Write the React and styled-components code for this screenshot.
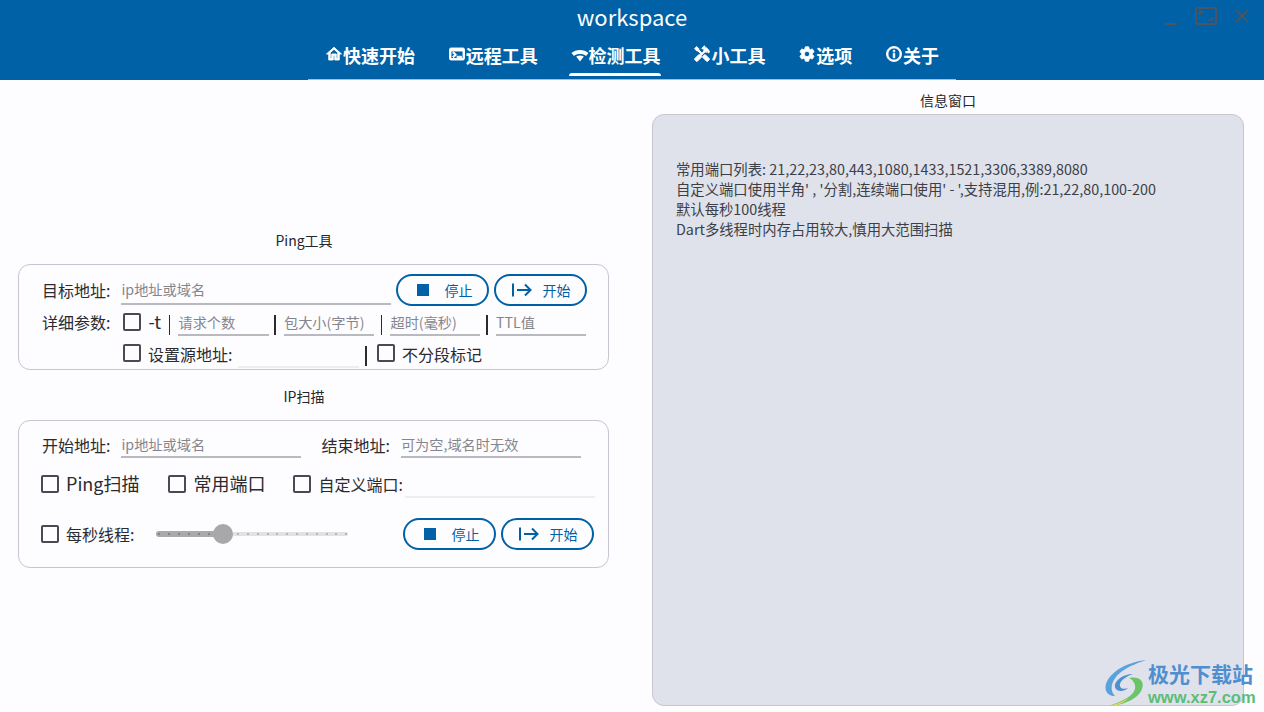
import React from 'react';
import styled, { createGlobalStyle } from 'styled-components';
import {
  MdOutlineHome,
  MdOutlineTerminal,
  MdHandyman,
  MdSettings,
  MdInfoOutline,
} from 'react-icons/md';

const Global = createGlobalStyle`
  html, body {
    margin: 0;
    padding: 0;
    background: #fdfcff;
  }
  * { box-sizing: border-box; }
  body {
    font-family: "Noto Sans CJK SC", "Noto Sans", sans-serif;
    color: #2f3036;
  }
`;

const Page = styled.div`
  position: relative;
  width: 1264px;
  height: 712px;
  overflow: hidden;
  background: #fdfcff;
`;

const Header = styled.header`
  position: relative;
  height: 80px;
  background: #0061a6;
  display: flex;
  flex-direction: column;
  align-items: center;
`;

const Title = styled.div`
  height: 38px;
  font-size: 22px;
  line-height: 33px;
  color: #fff;
`;

const Tabs = styled.nav`
  width: 648px;
  height: 42px;
  padding: 0 17px;
  display: flex;
  justify-content: space-between;
  border-bottom: 1px solid #9dc0dc;
`;

const Tab = styled.div`
  position: relative;
  height: 41px;
  display: flex;
  align-items: flex-start;
  padding-top: 4px;
  color: #fff;
  font-size: 18px;
  font-weight: 700;
  line-height: 27px;
  svg {
    width: 18px;
    height: 18px;
    margin-top: 3px;
    stroke: currentColor;
    stroke-width: ${(p) => (p.$bold ? 1.2 : 0)};
  }
  svg path[fill='none'] {
    stroke: none;
  }
  &::after {
    content: '';
    display: ${(p) => (p.$active ? 'block' : 'none')};
    position: absolute;
    left: -2px;
    right: 0;
    bottom: 3px;
    height: 3px;
    border-radius: 3px 3px 0 0;
    background: #fff;
  }
`;

const WindowButtons = styled.div`
  position: absolute;
  top: 7px;
  right: 14px;
  display: flex;
  align-items: flex-start;
  gap: 17px;
  svg { display: block; }
`;

const Main = styled.main`
  display: grid;
  grid-template-columns: 591px 592px;
  column-gap: 43px;
  padding: 0 20px 0 18px;
`;

const LeftColumn = styled.div`
  padding-top: 150px;
`;

const SectionLabel = styled.div`
  height: 34px;
  padding-right: 19px;
  font-size: 14px;
  line-height: 20px;
  text-align: center;
  color: #26272c;
`;

const Card = styled.section`
  border: 1px solid #c5c6cf;
  border-radius: 12px;
  background: #fdfcff;
  height: ${(p) => p.$height}px;
  margin-bottom: ${(p) => p.$gap || 0}px;
  padding: ${(p) => p.$pad};
  display: flex;
  flex-direction: column;
`;

const Row = styled.div`
  display: flex;
  align-items: center;
  height: ${(p) => p.$height}px;
  margin-left: ${(p) => p.$indent || 0}px;
  margin-top: ${(p) => p.$top || 0}px;
`;

const Label = styled.span`
  flex: none;
  font-size: ${(p) => p.$size || 16}px;
  line-height: 1.4;
  margin-left: ${(p) => p.$left || 0}px;
  margin-top: ${(p) => p.$top || 0}px;
  color: #2a2b30;
  white-space: nowrap;
`;

const Field = styled.div`
  flex: none;
  width: ${(p) => p.$width}px;
  height: ${(p) => p.$height || 26}px;
  margin-left: ${(p) => p.$left || 0}px;
  margin-top: ${(p) => p.$top || 0}px;
  border-bottom: 2px solid ${(p) => (p.$faint ? '#eeeef1' : '#b9b9c0')};
  font-size: 14.2px;
  line-height: ${(p) => (p.$height || 26) - 2}px;
  color: #85868d;
  white-space: nowrap;
`;

const Check = styled.span`
  flex: none;
  display: block;
  width: 18px;
  height: 18px;
  margin-left: ${(p) => p.$left || 0}px;
  margin-right: 7px;
  border: 2px solid #484b55;
  border-radius: 2px;
`;

const Divider = styled.span`
  flex: none;
  display: block;
  width: 1.5px;
  height: 20px;
  margin-left: ${(p) => p.$left}px;
  margin-top: 5px;
  background: #2a2b30;
`;

const Action = styled.button`
  flex: none;
  width: 93px;
  height: 32px;
  margin-left: ${(p) => p.$left || 0}px;
  padding: 0;
  display: flex;
  align-items: center;
  border: 2px solid #0061a6;
  border-radius: 16px;
  background: transparent;
  color: #0061a6;
  font-family: inherit;
  font-size: 14px;
  svg { flex: none; margin-left: ${(p) => p.$iconLeft}px; }
  span { margin-left: ${(p) => p.$textLeft}px; }
`;

const Slider = styled.div`
  position: relative;
  flex: none;
  width: 192px;
  height: 20px;
  margin-left: 22px;
  display: flex;
  align-items: center;
`;

const TrackOn = styled.div`
  width: 67px;
  height: 6px;
  border-radius: 3px 0 0 3px;
  background: #a9a9ac;
`;

const TrackOff = styled.div`
  flex: 1;
  height: 4px;
  border-radius: 0 2px 2px 0;
  background: #e2e2e6;
`;

const Ticks = styled.div`
  position: absolute;
  left: 2px;
  right: 1px;
  top: 9px;
  display: flex;
  justify-content: space-between;
`;

const Tick = styled.i`
  display: block;
  width: 2px;
  height: 2px;
  border-radius: 1px;
  background: ${(p) => (p.$on ? '#77777c' : '#a8a8ad')};
`;

const Thumb = styled.div`
  position: absolute;
  left: 57px;
  top: 0;
  width: 20px;
  height: 20px;
  border-radius: 50%;
  background: #a8a8ab;
`;

const InfoPanel = styled.section`
  height: 592px;
  padding: 44px 23px;
  border: 1px solid #c5c6cf;
  border-radius: 12px;
  background: #dfe2eb;
  font-size: 14.35px;
  line-height: 20px;
  color: #3d3f46;
`;

const InfoLine = styled.div`
  white-space: nowrap;
`;

const InfoTitle = styled(SectionLabel)`
  padding-top: 10px;
  padding-right: 0;
`;

const Watermark = styled.div`
  position: absolute;
  left: 1105px;
  top: 660px;
  width: 156px;
  height: 46px;
  display: flex;
`;

const MarkText = styled.div`
  margin: -2px 0 0 -1px;
  display: flex;
  flex-direction: column;
`;

const MarkName = styled.div`
  font-size: 21px;
  line-height: 30px;
  font-weight: 700;
  color: #4f8fd0;
  white-space: nowrap;
`;

const MarkUrl = styled.div`
  font-family: "Liberation Sans", sans-serif;
  font-size: 16.5px;
  line-height: 19px;
  font-weight: 700;
  color: #5cbc78;
  white-space: nowrap;
`;

const StopIcon = () => (
  <svg width="12" height="12" viewBox="0 0 12 12">
    <rect width="12" height="12" fill="#0061a6" />
  </svg>
);

const StartIcon = () => (
  <svg width="20" height="14" viewBox="0 0 20 14" fill="none" stroke="#0061a6" strokeWidth="2">
    <path d="M1 0.5V13.5" />
    <path d="M5 7H18.5M13 1.5L18.5 7L13 12.5" />
  </svg>
);

const WifiIcon = () => (
  <svg viewBox="0 0 18 18" fill="none" style={{ strokeWidth: 0 }}>
    <path d="M0.5 8C5 4 13 4 17.5 8L15 11C12 8.4 6 8.4 3 11Z" fill="currentColor" />
    <path d="M9 16.5L5.2 11.6C7.6 10 10.4 10 12.8 11.6Z" fill="currentColor" />
  </svg>
);

const Logo = () => (
  <svg width="44" height="46" viewBox="0 0 44 46" style={{ flex: 'none' }}>
    <path d="M41 0C24 2 6 10 1 24C-1 31 3 36 10 36C4 30 6 20 16 12C24 6 33 3 41 0Z" fill="#5aa2dc" />
    <path d="M28 14C18 14 9 21 10 27C11 32 19 32 23 28C18 30 14 28 15 24C16 20 22 16 28 14Z" fill="#4d8fcf" />
    <path d="M24 18C34 16 40 21 37 29C34 38 20 45 4 46C18 41 28 36 30 29C31 24 28 20 24 18Z" fill="#6cc46a" />
    <path d="M4 46C12 44 20 41 25 37C19 43 12 46 4 46Z" fill="#e8d85a" />
  </svg>
);

function Buttons({ first, second }) {
  return (
    <>
      <Action $left={first} $iconLeft={19} $textLeft={15}>
        <StopIcon />
        <span>停止</span>
      </Action>
      <Action $left={second} $iconLeft={16} $textLeft={10}>
        <StartIcon />
        <span>开始</span>
      </Action>
    </>
  );
}

const tabs = [
  { icon: <MdOutlineHome />, text: '快速开始', bold: true },
  { icon: <MdOutlineTerminal />, text: '远程工具', bold: true },
  { icon: <WifiIcon />, text: '检测工具', active: true },
  { icon: <MdHandyman />, text: '小工具', bold: true },
  { icon: <MdSettings />, text: '选项', bold: true },
  { icon: <MdInfoOutline />, text: '关于', bold: true },
];

export default function App() {
  const ticks = Array.from({ length: 20 }, (_, i) => i);
  return (
    <Page>
      <Global />
      <Header>
        <Title>workspace</Title>
        <Tabs>
          {tabs.map((t) => (
            <Tab key={t.text} $active={t.active} $bold={t.bold}>
              {t.icon}
              {t.text}
            </Tab>
          ))}
        </Tabs>
        <WindowButtons>
          <svg width="14" height="18" viewBox="0 0 14 18">
            <rect x="1" y="16" width="12" height="2" fill="#4a5560" />
          </svg>
          <svg width="22" height="18" viewBox="0 0 22 18" fill="none" stroke="#4a5560">
            <rect x="1" y="1" width="20" height="16" rx="1" strokeWidth="2" />
            <path d="M5 8V5H9M17 10V13H13" strokeWidth="2" />
          </svg>
          <svg width="16" height="16" viewBox="0 0 16 16" fill="none" stroke="#4a5560" strokeWidth="2" style={{ marginTop: 1 }}>
            <path d="M2 2L14 14M14 2L2 14" />
          </svg>
        </WindowButtons>
      </Header>
      <Main>
        <LeftColumn>
          <SectionLabel>Ping工具</SectionLabel>
          <Card $height={106} $gap={16} $pad="9px 0 0 23px">
            <Row $height={32}>
              <Label>目标地址:</Label>
              <Field $width={270} $left={11} $height={29}>ip地址或域名</Field>
              <Buttons first={5} second={5} />
            </Row>
            <Row $height={28} $top={2}>
              <Label>详细参数:</Label>
              <Check $left={13} />
              <Label $size={18}>-t</Label>
              <Divider $left={8} />
              <Field $width={91} $left={8} $top={2}>请求个数</Field>
              <Divider $left={5} />
              <Field $width={90} $left={8} $top={2}>包大小(字节)</Field>
              <Divider $left={7} />
              <Field $width={90} $left={8} $top={2}>超时(毫秒)</Field>
              <Divider $left={6} />
              <Field $width={90} $left={8} $top={2}>TTL值</Field>
            </Row>
            <Row $height={30} $indent={81} $top={2}>
              <Check />
              <Label $top={2}>设置源地址:</Label>
              <Field $width={121} $left={6} $top={4} $faint />
              <Divider $left={6} />
              <Check $left={10} />
              <Label $top={2}>不分段标记</Label>
            </Row>
          </Card>
          <SectionLabel>IP扫描</SectionLabel>
          <Card $height={148} $pad="9px 0 0 22px">
            <Row $height={30}>
              <Label $left={1}>开始地址:</Label>
              <Field $width={180} $left={11}>ip地址或域名</Field>
              <Label $left={20}>结束地址:</Label>
              <Field $width={180} $left={11}>可为空,域名时无效</Field>
            </Row>
            <Row $height={30} $top={9}>
              <Check />
              <Label $size={18}>Ping扫描</Label>
              <Check $left={29} />
              <Label $size={18}>常用端口</Label>
              <Check $left={28} />
              <Label>自定义端口:</Label>
              <Field $width={190} $left={2} $height={27} $faint />
            </Row>
            <Row $height={32} $top={19}>
              <Check />
              <Label>每秒线程:</Label>
              <Slider>
                <TrackOn />
                <TrackOff />
                <Ticks>
                  {ticks.map((i) => (
                    <Tick key={i} $on={i < 7} />
                  ))}
                </Ticks>
                <Thumb />
              </Slider>
              <Buttons first={55} second={5} />
            </Row>
          </Card>
        </LeftColumn>
        <div>
          <InfoTitle>信息窗口</InfoTitle>
          <InfoPanel>
            <InfoLine>常用端口列表: 21,22,23,80,443,1080,1433,1521,3306,3389,8080</InfoLine>
            <InfoLine>自定义端口使用半角' , '分割,连续端口使用' - ',支持混用,例:21,22,80,100-200</InfoLine>
            <InfoLine>默认每秒100线程</InfoLine>
            <InfoLine>Dart多线程时内存占用较大,慎用大范围扫描</InfoLine>
          </InfoPanel>
        </div>
      </Main>
      <Watermark>
        <Logo />
        <MarkText>
          <MarkName>极光下载站</MarkName>
          <MarkUrl>www.xz7.com</MarkUrl>
        </MarkText>
      </Watermark>
    </Page>
  );
}
